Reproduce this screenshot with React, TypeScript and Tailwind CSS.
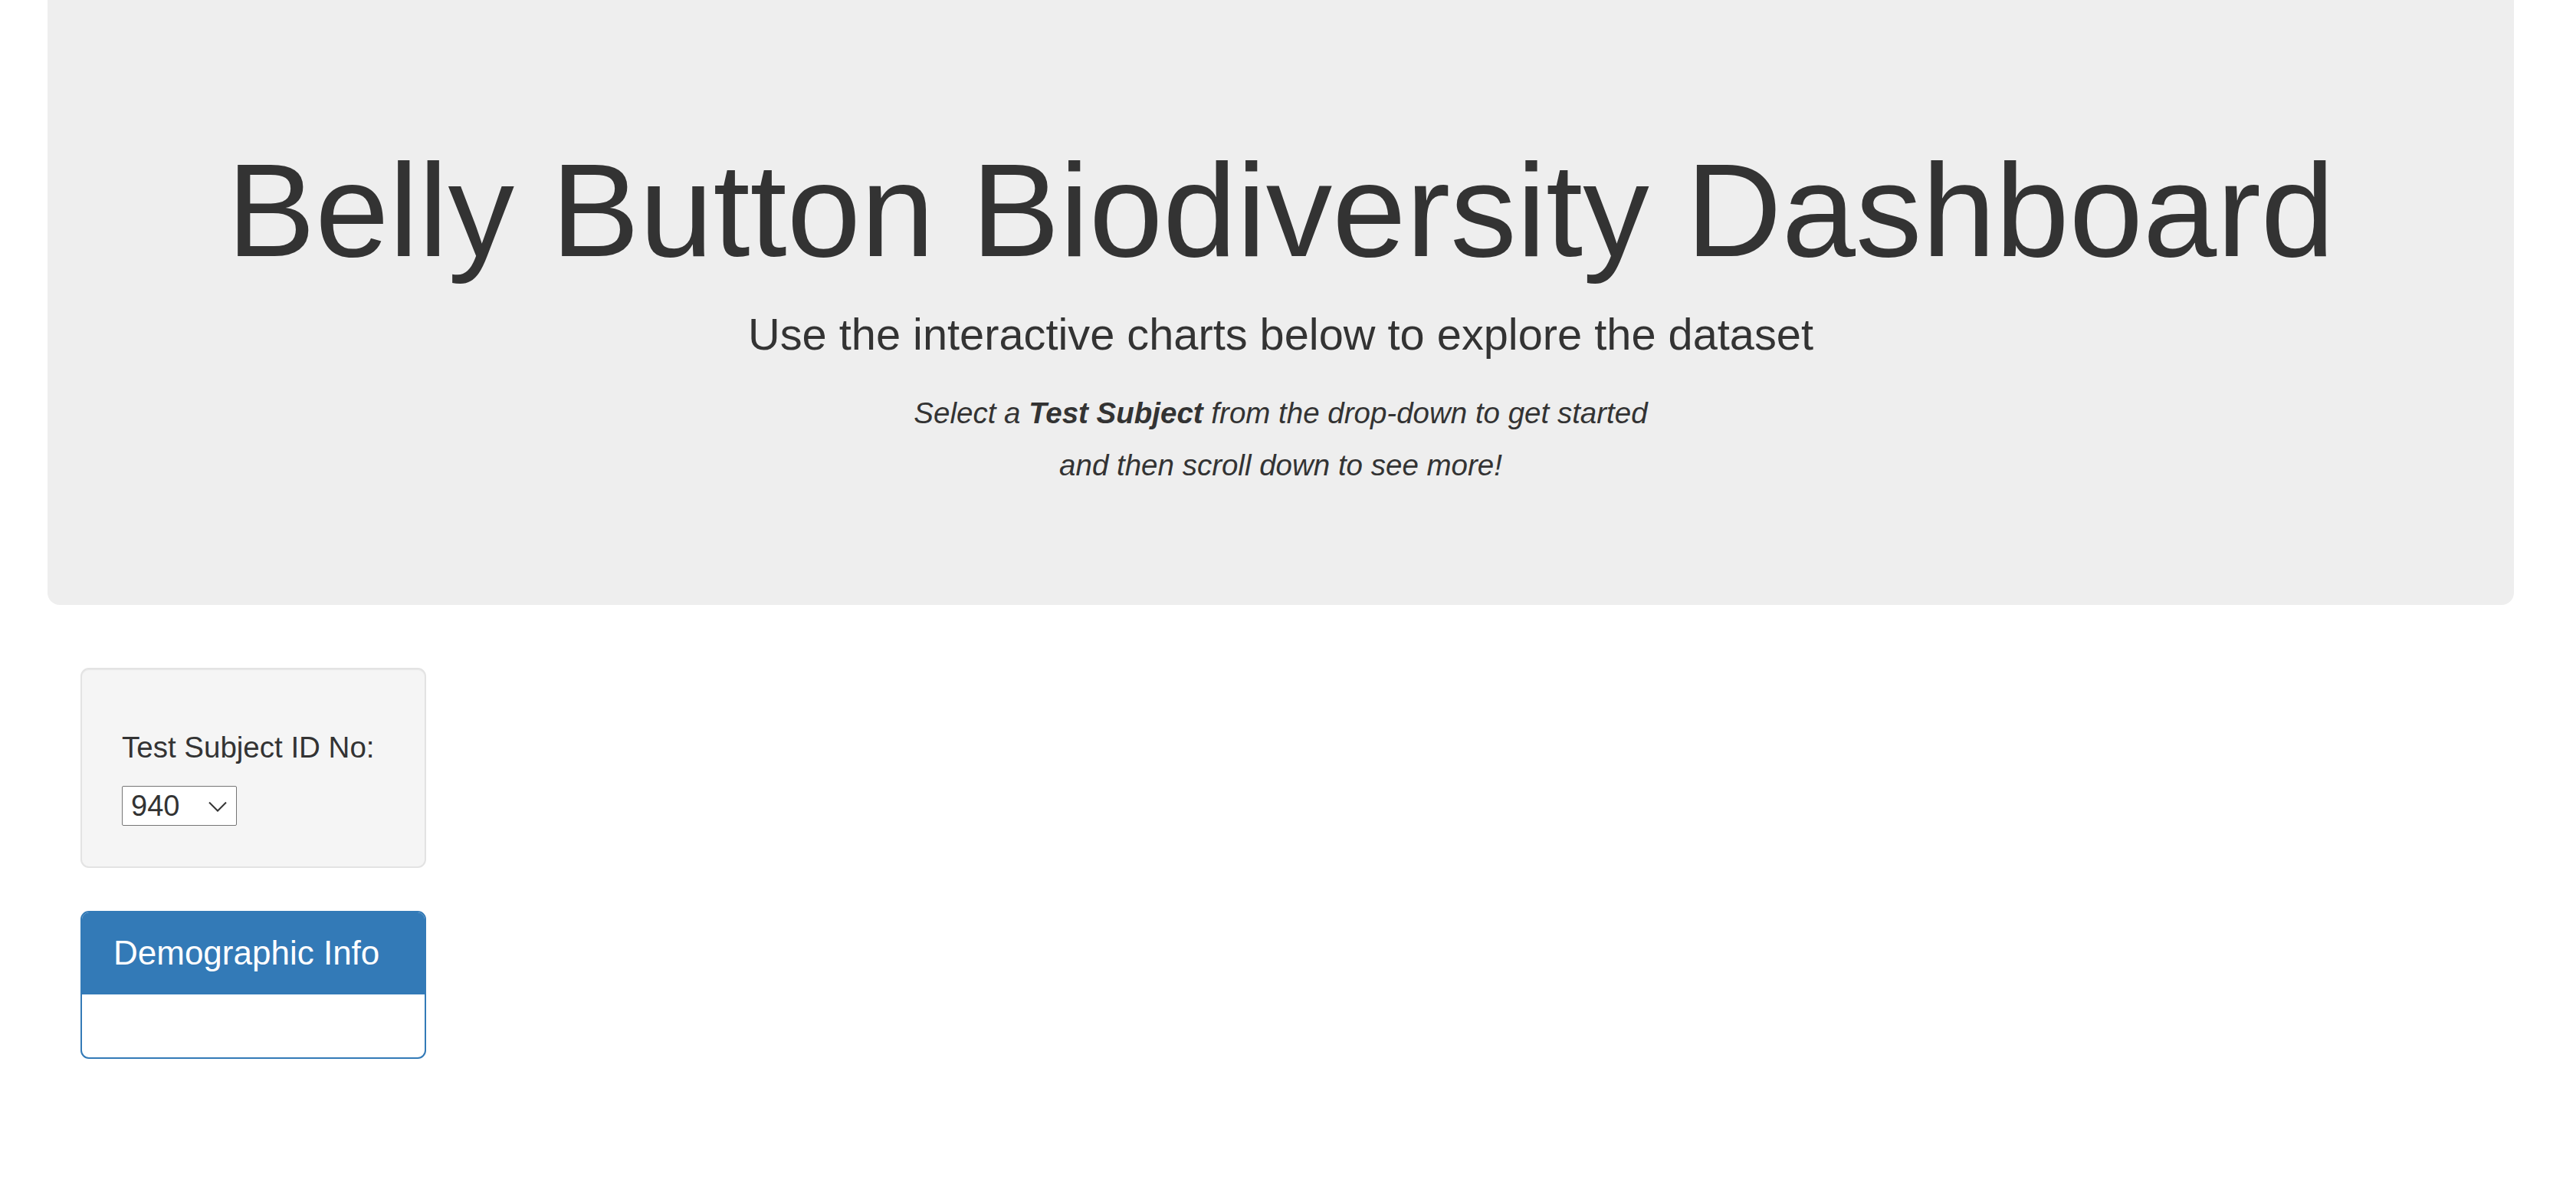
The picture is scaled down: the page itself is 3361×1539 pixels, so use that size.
import React from "react";

export default function App() {
  return (
    <div className="min-h-screen w-full bg-white text-[#333333] font-['Liberation_Sans',Arial,sans-serif]">
      <div className="ml-[62px] mr-[81px] rounded-b-[16px] bg-[#eeeeee] pt-[179px] pb-[148px] text-center">
        <h1 className="text-[173px] leading-[190px] font-normal">
          Belly Button Biodiversity Dashboard
        </h1>
        <p className="mt-[26px] text-[57.75px] leading-[82px] font-normal">
          Use the interactive charts below to explore the dataset
        </p>
        <p className="mt-[28px] text-[38.5px] leading-[68px] italic">
          Select a <b className="font-bold">Test Subject</b> from the drop-down to get started
          <br />
          and then scroll down to see more!
        </p>
      </div>

      <div className="ml-[105px] mt-[82px] flex w-[451px] flex-col gap-[56px]">
        <div className="rounded-[11px] border-2 border-[#e3e3e3] bg-[#f5f5f5] pt-[74px] pb-[53px] pl-[52px] shadow-[inset_0_1px_1px_rgba(0,0,0,0.05)]">
          <div className="text-[38.5px] leading-[55px]">Test Subject ID No:</div>
          <div className="relative mt-[23px] h-[52px] w-[150px]">
            <select
              defaultValue="940"
              className="h-full w-full appearance-none rounded-[2px] border border-[#767676] bg-white pl-[11px] text-[38px] leading-[50px] text-[#333] outline-none font-['Liberation_Sans',Arial,sans-serif]"
            >
              <option value="940">940</option>
              <option value="941">941</option>
              <option value="943">943</option>
            </select>
            <svg
              className="pointer-events-none absolute left-[113px] top-[20px]"
              width="24"
              height="14"
              viewBox="0 0 24 14"
              fill="none"
            >
              <path d="M1 1.5 L12 12.5 L23 1.5" stroke="#333" strokeWidth="2" />
            </svg>
          </div>
        </div>

        <div className="overflow-hidden rounded-[11px] border-2 border-[#337ab7] bg-white">
          <div className="bg-[#337ab7] pt-[29px] pb-[30px] pl-[41px] text-[44px] leading-[48px] text-white">
            Demographic Info
          </div>
          <div className="h-[82px]" />
        </div>
      </div>
    </div>
  );
}
